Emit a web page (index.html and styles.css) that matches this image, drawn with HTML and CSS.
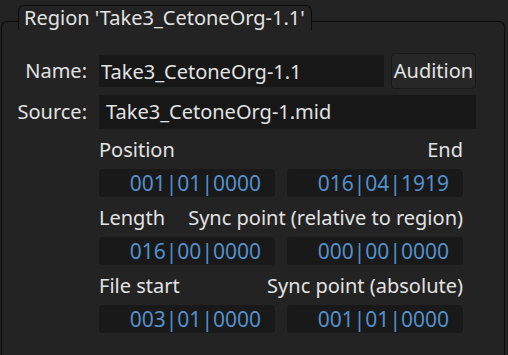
FILE: index.html
```html
<!DOCTYPE html>
<html lang="en">
<head>
  <meta charset="UTF-8" />
  <meta name="viewport" content="width=device-width, initial-scale=1.0"/>
  <title>Region</title>
  <link rel="stylesheet" href="styles.css">
</head>
<body>

  <div class="frame">
    <div class="frame-title">Region 'Take3_CetoneOrg-1.1'</div>

    <div class="row name-row">
      <label class="row-label" for="region-name">Name:</label>
      <input class="entry" id="region-name" type="text" value="Take3_CetoneOrg-1.1">
      <button class="btn">Audition</button>
    </div>

    <div class="row source-row">
      <div class="row-label">Source:</div>
      <div class="entry source">Take3_CetoneOrg-1.mid</div>
    </div>

    <div class="clocks">
      <div class="clock-labels">
        <span>Position</span>
        <span>End</span>
      </div>
      <div class="clock-pair">
        <div class="clock">001|01|0000</div>
        <div class="clock">016|04|1919</div>
      </div>

      <div class="clock-labels">
        <span>Length</span>
        <span>Sync point (relative to region)</span>
      </div>
      <div class="clock-pair">
        <div class="clock">016|00|0000</div>
        <div class="clock">000|00|0000</div>
      </div>

      <div class="clock-labels">
        <span>File start</span>
        <span>Sync point (absolute)</span>
      </div>
      <div class="clock-pair">
        <div class="clock">003|01|0000</div>
        <div class="clock">001|01|0000</div>
      </div>
    </div>
  </div>

</body>
</html>
```

FILE: styles.css
```css
* {
  margin: 0;
  padding: 0;
  box-sizing: border-box;
}
body {
  font-family: 'Noto Sans', sans-serif;
  font-size: 20px;
  line-height: 24px;
  color: #e2e2e2;
  background: #232323;
  width: 508px;
  height: 355px;
  overflow: hidden;
  padding-top: 21px;
  padding-left: 1px;
}
.frame {
  width: 504px;
  height: 340px;
  border: 1px solid #0b0b0b;
  border-bottom: none;
  border-radius: 6px 6px 0 0;
  padding: 0 28px 0 0;
}
.frame-title {
  width: fit-content;
  margin: -17px 0 0 16px;
  padding: 0 6px 0 5px;
  background: #232323;
  border: 1px solid #0b0b0b;
  border-bottom: none;
  border-radius: 6px 6px 0 0;
}
.row {
  display: flex;
  align-items: center;
}
.row-label {
  width: 85px;
  flex: none;
  text-align: right;
  margin-right: 12px;
}
.name-row {
  margin-top: 23px;
  height: 36px;
}
.source-row {
  margin-top: 6px;
  height: 34px;
}
.entry {
  flex: 1;
  min-width: 0;
  height: 32px;
  background: #171717;
  border: none;
  color: #e2e2e2;
  font: inherit;
  padding: 0 0 0 2px;
  outline: none;
}
.source {
  height: 34px;
  padding: 5px 0 0 7px;
}
.btn {
  width: 85px;
  height: 36px;
  margin-left: 7px;
  background: #272727;
  border: 1px solid #191919;
  border-radius: 4px;
  color: #e2e2e2;
  font: inherit;
}
.clocks {
  margin: 9px 0 0 97px;
  width: 364px;
}
.clock-labels {
  display: flex;
  justify-content: space-between;
  height: 24px;
}
.clock-pair {
  display: grid;
  grid-template-columns: 1fr 1fr;
  gap: 12px;
  margin: 7px 0 9px;
}
.clock {
  height: 28px;
  background: #191919;
  border-radius: 4px;
  color: #5390cc;
  font-size: 21px;
  line-height: 28px;
  text-align: right;
  padding-right: 14px;
}
```
